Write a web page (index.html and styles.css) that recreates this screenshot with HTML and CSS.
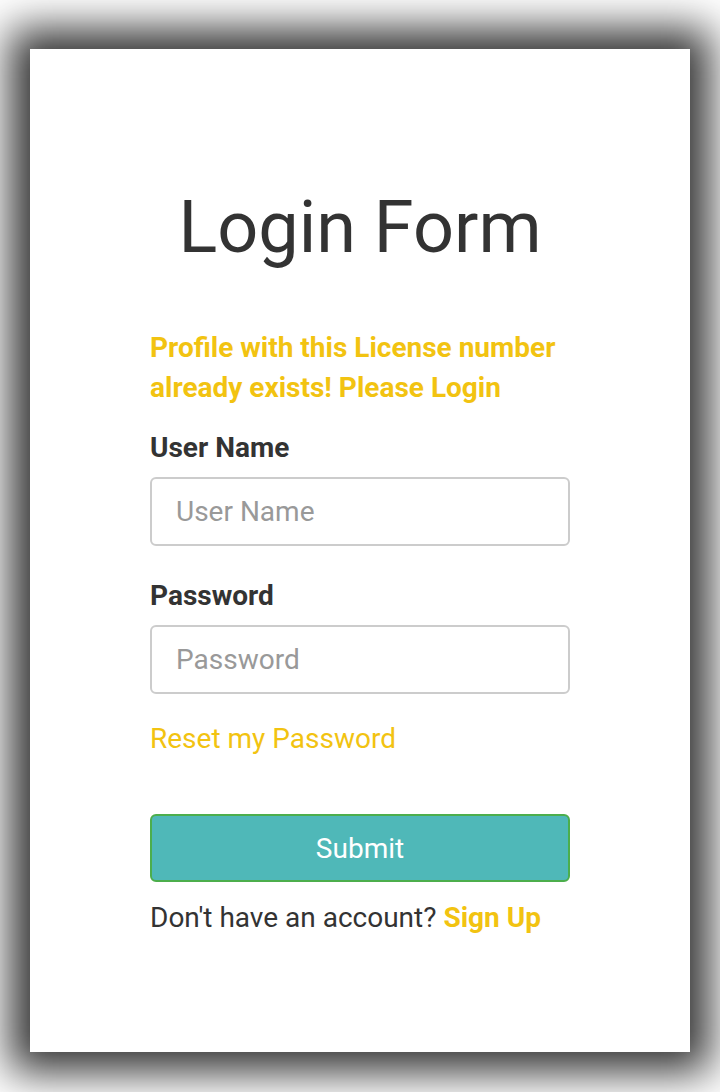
FILE: index.html
```html
<!DOCTYPE html>
<html>
<head>
<meta charset="utf-8">
<link rel="stylesheet" href="styles.css">
</head>
<body>
<div class="page">
  <div class="card">
    <form class="form">
      <h1 class="title">Login Form</h1>
      <p class="error">Profile with this License number already exists! Please Login</p>
      <label class="label" for="user">User Name</label>
      <input class="input" id="user" type="text" placeholder="User Name">
      <label class="label label-pw" for="pw">Password</label>
      <input class="input" id="pw" type="password" placeholder="Password">
      <a class="reset" href="#">Reset my Password</a>
      <button class="submit" type="button">Submit</button>
      <p class="signup">Don't have an account? <a href="#" class="signup-link">Sign Up</a></p>
    </form>
  </div>
</div>
</body>
</html>
```

FILE: styles.css
```css
* { box-sizing: border-box; }
html, body { margin: 0; padding: 0; background: #fff; }
body { font-family: Roboto, "Noto Sans", sans-serif; color: #333; }
.page { padding: 49px 30px 40px; }
.card {
  background: #fff;
  height: 1003px;
  box-shadow: 0 0 40px 20px rgba(0,0,0,0.8);
  display: flex;
  justify-content: center;
}
.form { width: 420px; display: flex; flex-direction: column; padding-top: 136px; }
.title {
  margin: 0;
  font-size: 72px;
  font-weight: 400;
  line-height: 86px;
  text-align: center;
  color: #333;
}
.error {
  margin: 57px 0 0;
  font-size: 28px;
  font-weight: 700;
  line-height: 40px;
  color: #f2c311;
}
.label {
  margin-top: 20px;
  font-size: 28px;
  font-weight: 700;
  line-height: 40px;
  color: #333;
}
.label-pw { margin-top: 30px; }
.input {
  margin-top: 9px;
  height: 69px;
  border: 2px solid #ccc;
  border-radius: 6px;
  padding: 0 24px;
  font-family: inherit;
  font-size: 28px;
  color: #333;
  outline: none;
}
.input::placeholder { color: #999; }
.reset {
  margin-top: 25px;
  font-size: 28px;
  line-height: 40px;
  color: #f2c311;
  text-decoration: none;
  align-self: flex-start;
}
.submit {
  margin-top: 55px;
  height: 68px;
  background: #4fb8b8;
  border: 2px solid #4cae4c;
  border-radius: 6px;
  color: #fff;
  font-family: inherit;
  font-size: 28px;
}
.signup {
  margin: 16px 0 0;
  font-size: 28px;
  line-height: 40px;
  color: #333;
}
.signup-link { color: #f2c311; font-weight: 700; text-decoration: none; }
```
